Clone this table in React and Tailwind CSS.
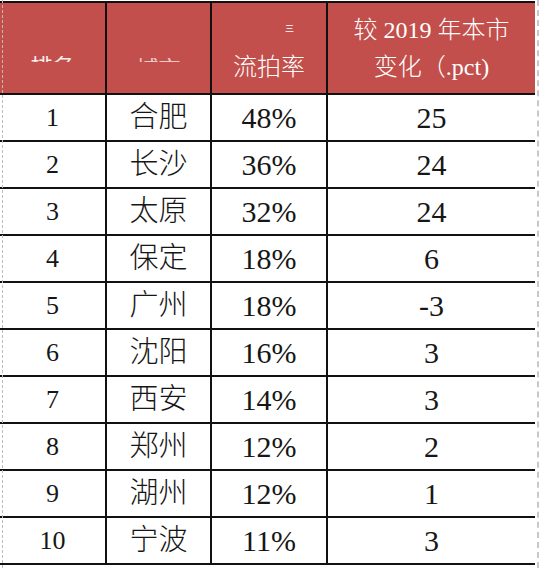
import React from "react";

const rows = [
  ["1", "合肥", "48%", "25"],
  ["2", "长沙", "36%", "24"],
  ["3", "太原", "32%", "24"],
  ["4", "保定", "18%", "6"],
  ["5", "广州", "18%", "-3"],
  ["6", "沈阳", "16%", "3"],
  ["7", "西安", "14%", "3"],
  ["8", "郑州", "12%", "2"],
  ["9", "湖州", "12%", "1"],
  ["10", "宁波", "11%", "3"],
];

const font = { fontFamily: '"Liberation Serif", "Noto Sans CJK SC", serif' };

export default function App() {
  return (
    <div className="relative w-[540px] h-[568px] bg-white overflow-hidden" style={font}>
      <div className="w-[535px] mt-[1px] border-t-2 border-b-2 border-[#111]">
        {/* header */}
        <div className="flex h-[90px] bg-[#c24f4b] text-white">
          <div className="w-[105px] flex justify-center pt-[53px]">
            <div className="h-[6px] overflow-hidden text-[22px] leading-none opacity-90">排名</div>
          </div>
          <div className="w-[105px] border-l-2 border-[#111] flex justify-center pt-[55px]">
            <div className="h-[4px] overflow-hidden text-[22px] leading-none opacity-70">城市</div>
          </div>
          <div className="w-[116px] border-l-2 border-[#111] flex flex-col items-center justify-center">
            <div className="h-[37px] w-full flex items-center justify-end pr-[32px] text-[9px] leading-none">三</div>
            <div className="h-[37px] flex items-center text-[24px] leading-none font-light">流拍率</div>
          </div>
          <div className="flex-1 border-l-2 border-[#111] flex flex-col items-center justify-center text-[24px] leading-none font-light">
            <div className="h-[37px] flex items-center whitespace-pre">较 2019 年本市</div>
            <div className="h-[37px] flex items-center whitespace-pre">变化（.pct)</div>
          </div>
        </div>
        {rows.map((r) => (
          <div key={r[0]} className="flex h-[47px] border-t-2 border-[#111] text-[#161616]">
            <div className="w-[105px] flex items-center justify-center text-[26px] leading-none">{r[0]}</div>
            <div className="w-[105px] border-l-2 border-[#111] flex items-center justify-center text-[29px] leading-none font-light">{r[1]}</div>
            <div className="w-[116px] border-l-2 border-[#111] flex items-center justify-center text-[30px] leading-none">{r[2]}</div>
            <div className="flex-1 border-l-2 border-[#111] flex items-center justify-center text-[30px] leading-none">{r[3]}</div>
          </div>
        ))}
      </div>
      <div className="absolute left-[2px] top-0 h-full border-l border-dashed border-[#bdbdbd]" />
      <div className="absolute left-[537px] top-0 h-full border-l-2 border-dashed border-[#c8c8c8]" />
    </div>
  );
}
